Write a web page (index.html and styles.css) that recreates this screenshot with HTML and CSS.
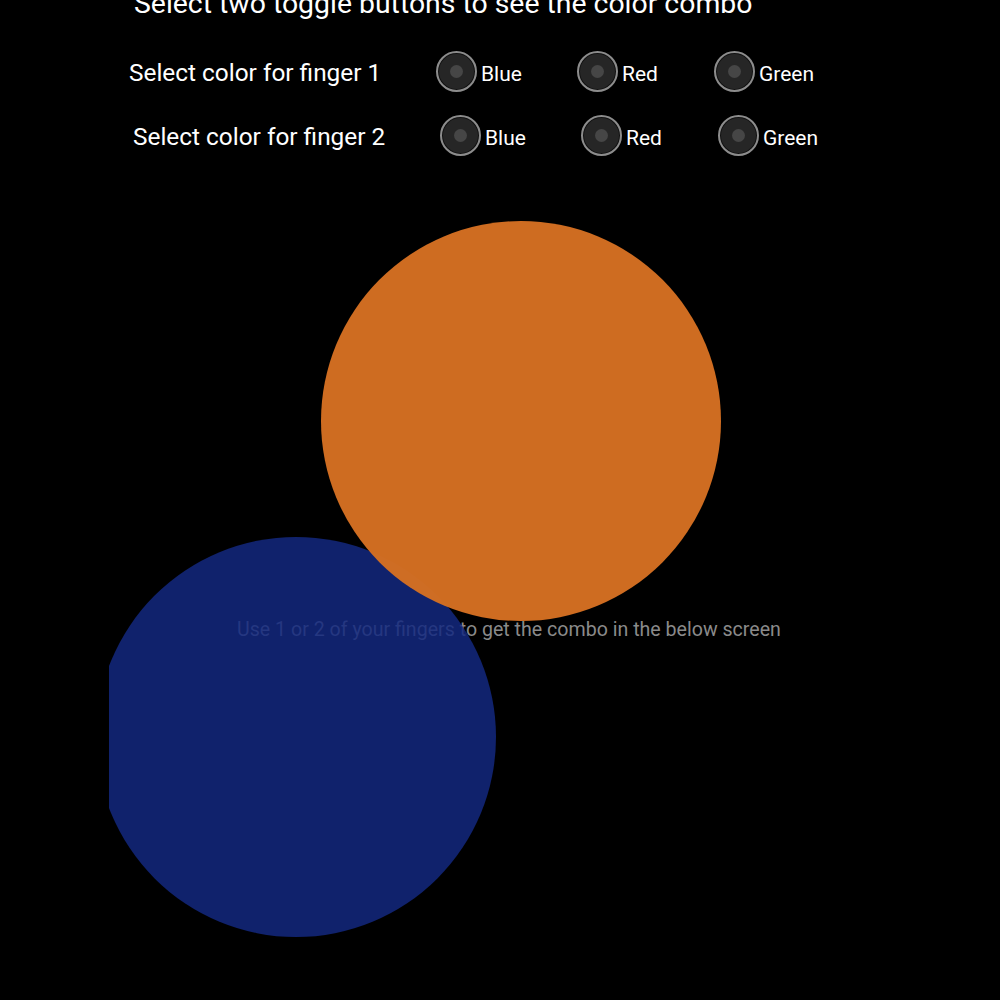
FILE: index.html
```html
<!DOCTYPE html>
<html lang="en">
<head>
    <meta charset="UTF-8">
    <title>Color Combo</title>
    <link rel="stylesheet" href="styles.css">
</head>
<body>

    <div class="title">Select two toggle buttons to see the color combo</div>

    <!-- finger 1 -->
    <div class="row row-one">
        <div class="row-label">Select color for finger 1</div>
        <label class="option"><span class="radio"></span><span class="option-text">Blue</span></label>
        <label class="option"><span class="radio"></span><span class="option-text">Red</span></label>
        <label class="option"><span class="radio"></span><span class="option-text">Green</span></label>
    </div>

    <!-- finger 2 -->
    <div class="row row-two">
        <div class="row-label">Select color for finger 2</div>
        <label class="option"><span class="radio"></span><span class="option-text">Blue</span></label>
        <label class="option"><span class="radio"></span><span class="option-text">Red</span></label>
        <label class="option"><span class="radio"></span><span class="option-text">Green</span></label>
    </div>

    <!-- touch area -->
    <div class="canvas">
        <div class="hint">Use 1 or 2 of your fingers to get the combo in the below screen</div>
        <div class="touch blue"></div>
        <div class="touch orange"></div>
    </div>

</body>
</html>
```

FILE: styles.css
```css
body {
    font-family: Roboto, "Noto Sans", sans-serif;
    background: #000;
    color: #fff;
    margin: 0;
    padding: 0;
    width: 1000px;
    height: 1000px;
    overflow: hidden;
}
.title {
    font-size: 28.4px;
    line-height: 32px;
    margin-top: -12px;
    padding-left: 134px;
}
.row {
    display: flex;
    align-items: center;
    height: 64px;
}
.row-one {
    margin-top: 19px;
    padding-left: 129px;
}
.row-two {
    padding-left: 133px;
}
.row-label {
    width: 307px;
    font-size: 24.4px;
    padding-top: 3px;
}
.option {
    display: flex;
    align-items: center;
    font-size: 21px;
}
.option:nth-child(2) {
    width: 141px;
}
.option:nth-child(3) {
    width: 137px;
}
.option-text {
    margin-top: 5px;
}
.radio {
    position: relative;
    width: 37px;
    height: 37px;
    border: 2px solid #8c8c8c;
    border-radius: 50%;
    background: #262626;
    margin-right: 4px;
    box-shadow: inset 0 0 0 1px #111;
}
.radio::after {
    content: "";
    position: absolute;
    left: 12px;
    top: 12px;
    width: 13px;
    height: 13px;
    border-radius: 50%;
    background: #464646;
}
.canvas {
    position: relative;
    margin-left: 109px;
    width: 800px;
    height: 833px;
    overflow: hidden;
}
.hint {
    padding-top: 452px;
    line-height: 22px;
    text-align: center;
    font-size: 19.6px;
    color: #8a8a8a;
}
.touch {
    position: absolute;
    width: 400px;
    height: 400px;
    border-radius: 50%;
}
.blue {
    left: -13px;
    top: 370px;
    background: rgba(19, 40, 127, 0.85);
}
.orange {
    left: 212px;
    top: 54px;
    background: rgba(213, 111, 34, 0.97);
}
```
